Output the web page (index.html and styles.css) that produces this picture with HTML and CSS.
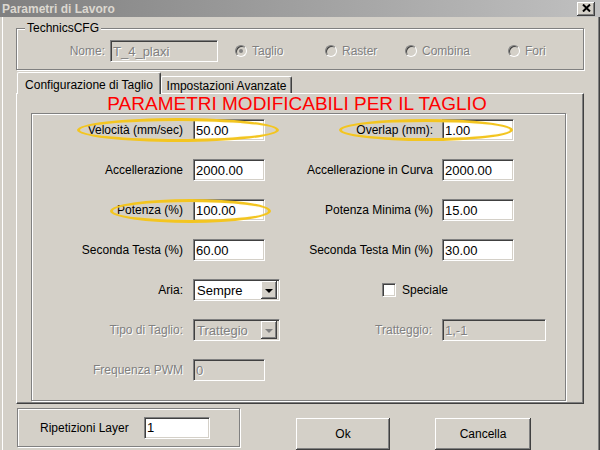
FILE: index.html
```html
<!DOCTYPE html>
<html>
<head>
<meta charset="utf-8">
<link rel="stylesheet" href="styles.css">
</head>
<body>
<div class="window">
  <div class="titlebar">
    <span class="title">Parametri di Lavoro</span>
    <span class="close"><svg width="9" height="8" viewBox="0 0 9 8"><path d="M1 0.5 L8 7.5 M8 0.5 L1 7.5" stroke="#000" stroke-width="2"/></svg></span>
  </div>

  <fieldset class="group">
    <legend>TechnicsCFG</legend>
    <div class="nome-row">
      <span class="nome-label dis">Nome:</span>
      <span class="field field-dis nome-field">T_4_plaxi</span>
      <span class="radio r-taglio"><span class="rb checked"></span><span class="dis">Taglio</span></span>
      <span class="radio r-raster"><span class="rb"></span><span class="dis">Raster</span></span>
      <span class="radio r-combina"><span class="rb"></span><span class="dis">Combina</span></span>
      <span class="radio r-fori"><span class="rb"></span><span class="dis">Fori</span></span>
    </div>
  </fieldset>

  <div class="tabs">
    <div class="tab active">Configurazione di Taglio</div>
    <div class="tab tab2">Impostazioni Avanzate</div>
  </div>

  <div class="panel">
    <div class="banner">PARAMETRI MODIFICABILI PER IL TAGLIO</div>
    <div class="inner">
      <span class="lbl">Velocità (mm/sec)</span>
      <span class="field">50.00</span>
      <span class="lbl">Overlap (mm):</span>
      <span class="field">1.00</span>

      <span class="lbl">Accellerazione</span>
      <span class="field">2000.00</span>
      <span class="lbl">Accellerazione in Curva</span>
      <span class="field">2000.00</span>

      <span class="lbl">Potenza (%)</span>
      <span class="field">100.00</span>
      <span class="lbl">Potenza Minima (%)</span>
      <span class="field">15.00</span>

      <span class="lbl">Seconda Testa (%)</span>
      <span class="field">60.00</span>
      <span class="lbl">Seconda Testa Min (%)</span>
      <span class="field">30.00</span>

      <span class="lbl">Aria:</span>
      <span class="select"><span class="sel-text">Sempre</span><span class="sel-btn"><span class="arrow"></span></span></span>
      <span class="check-item"><span class="cb"></span>Speciale</span>

      <span class="lbl dis">Tipo di Taglio:</span>
      <span class="select select-dis"><span class="sel-text dis">Trattegio</span><span class="sel-btn"><span class="arrow"></span></span></span>
      <span class="lbl dis">Tratteggio:</span>
      <span class="field field-dis wide">1,-1</span>

      <span class="lbl dis">Frequenza PWM</span>
      <span class="field field-dis">0</span>
    </div>
    <span class="ellipse e1"></span>
    <span class="ellipse e2"></span>
    <span class="ellipse e3"></span>
  </div>

  <div class="bottom">
    <div class="repeat">
      <span class="rep-label">Ripetizioni Layer</span>
      <span class="field rep-field">1</span>
    </div>
    <div class="btn btn-ok">Ok</div>
    <div class="btn btn-cancel">Cancella</div>
  </div>
</div>
</body>
</html>
```

FILE: styles.css
```css
* { box-sizing: border-box; }

body {
  margin: 0;
  width: 600px;
  height: 450px;
  overflow: hidden;
  background: #d4d0c8;
  font-family: "Liberation Sans", Arial, sans-serif;
  font-size: 12px;
  color: #000;
}

.window {
  width: 600px;
  height: 450px;
  background: #d4d0c8;
  box-shadow: inset 2px 0 0 #d4d0c8, inset 3px 0 0 #fff, inset -1px 0 0 #404040, inset -2px 0 0 #808080;
  display: flex;
  flex-direction: column;
}

/* title bar */
.titlebar {
  height: 17px;
  flex: none;
  background: linear-gradient(to right, #808080, #c0c0c0);
  display: flex;
  align-items: center;
  justify-content: space-between;
  padding: 0 5px 0 2px;
}
.title {
  color: #dcd8d0;
  font-weight: bold;
  font-size: 12px;
}
.close {
  width: 18px;
  height: 14px;
  background: #d4d0c8;
  box-shadow: inset -1px -1px #404040, inset 1px 1px #fff, inset -2px -2px #808080;
  display: flex;
  align-items: center;
  justify-content: center;
  padding-bottom: 1px;
}

.dis {
  color: #808080;
  text-shadow: 1px 1px 0 #fff;
}

/* group box */
.group {
  margin: 4px 16px 0;
  padding: 5px 0 7px;
  border: 1px solid #808080;
  box-shadow: inset 1px 1px #fff, 1px 1px #fff;
  min-width: 0;
  flex: none;
}
.group legend {
  margin-left: 8px;
  padding: 0 2px;
  line-height: 14px;
  background: #d4d0c8;
}
.nome-row {
  display: flex;
  align-items: center;
  height: 22px;
}
.nome-label {
  width: 88px;
  text-align: right;
  margin-right: 5px;
}

.radio {
  display: flex;
  align-items: center;
  gap: 5px;
}
.r-taglio { margin-left: 17px; width: 90px; }
.r-raster { width: 80px; }
.r-combina { width: 103px; }
.rb {
  width: 12px;
  height: 12px;
  border-radius: 50%;
  border: 1px solid;
  border-color: #808080 #fff #fff #808080;
  background: #d4d0c8;
  box-shadow: inset 1px 1px 0 #404040;
  display: flex;
  align-items: center;
  justify-content: center;
}
.rb.checked::after {
  content: "";
  width: 4px;
  height: 4px;
  border-radius: 50%;
  background: #808080;
}

/* fields */
.field {
  height: 22px;
  width: 72px;
  flex: none;
  background: #fff;
  border-top: 1px solid #808080;
  border-left: 1px solid #808080;
  border-bottom: 1px solid #fff;
  border-right: 1px solid #fff;
  box-shadow: inset 1px 1px #404040, inset -1px -1px #d4d0c8;
  font-size: 13px;
  padding: 0 2px;
  display: flex;
  align-items: center;
}
.field.field-dis {
  background: #d4d0c8;
  color: #808080;
  text-shadow: 1px 1px 0 #fff;
}
.field.wide { width: 104px; }
.field.nome-field { width: 108px; }
.field.rep-field { width: 66px; }

/* tabs */
.tabs {
  display: flex;
  align-items: flex-end;
  margin: 1px 0 0 17px;
  height: 22px;
  position: relative;
  z-index: 1;
  flex: none;
}
.tab {
  height: 17px;
  border-top: 1px solid #fff;
  border-left: 1px solid #fff;
  border-right: 1px solid #404040;
  box-shadow: inset -1px 0 #808080;
  border-radius: 2px 2px 0 0;
  display: flex;
  align-items: center;
  justify-content: center;
  padding-top: 1px;
}
.tab.active {
  width: 144px;
  height: 22px;
  margin-bottom: -1px;
  background: #d4d0c8;
  padding-top: 2px;
}
.tab2 { width: 131px; }

/* panel */
.panel {
  position: relative;
  margin: 0 16px;
  height: 311px;
  flex: none;
  border-top: 1px solid #fff;
  border-left: 1px solid #fff;
  border-right: 1px solid #404040;
  border-bottom: 1px solid #404040;
  box-shadow: inset -1px -1px #808080;
  display: flex;
  flex-direction: column;
}
.banner {
  height: 19px;
  color: #ff0000;
  font-size: 19px;
  line-height: 20px;
  text-align: center;
  padding-right: 6px;
}
.inner {
  margin: 0 17px 0 14px;
  height: 288px;
  border: 1px solid #808080;
  box-shadow: inset 1px 1px #fff, 1px 1px #fff;
  padding-top: 5px;
  display: grid;
  grid-template-columns: 161px 87px 162px 1fr;
  grid-auto-rows: 22px;
  row-gap: 18px;
  align-items: center;
}
.lbl {
  text-align: right;
  padding-right: 10px;
  white-space: nowrap;
}
.inner .lbl:nth-child(4n+3) { padding-right: 9px; }

.select {
  width: 87px;
  height: 22px;
  background: #fff;
  border-top: 1px solid #808080;
  border-left: 1px solid #808080;
  border-bottom: 1px solid #fff;
  border-right: 1px solid #fff;
  box-shadow: inset 1px 1px #404040, inset -1px -1px #d4d0c8;
  display: flex;
  align-items: center;
  padding: 2px;
  font-size: 13px;
}
.select-dis { background: #d4d0c8; }
.sel-text { flex: 1; padding-left: 1px; }
.sel-btn {
  width: 16px;
  height: 18px;
  background: #d4d0c8;
  box-shadow: inset -1px -1px #404040, inset 1px 1px #fff, inset -2px -2px #808080;
  display: flex;
  align-items: center;
  justify-content: center;
}
.arrow {
  width: 0;
  height: 0;
  border-left: 4px solid transparent;
  border-right: 4px solid transparent;
  border-top: 4px solid #000;
  margin-top: 1px;
}
.select-dis .arrow { border-top-color: #808080; }

.check-item {
  grid-column: 3 / span 2;
  display: flex;
  align-items: center;
  gap: 6px;
  padding-left: 102px;
  font-size: 12px;
}
.cb {
  width: 14px;
  height: 14px;
  background: #fff;
  border-top: 1px solid #808080;
  border-left: 1px solid #808080;
  border-bottom: 1px solid #fff;
  border-right: 1px solid #fff;
  box-shadow: inset 1px 1px #404040, inset -1px -1px #d4d0c8;
}

/* highlight ellipses drawn over the form */
.ellipse {
  position: absolute;
  border: 3px solid #f3c520;
  border-radius: 50%;
  box-shadow: inset 0 0 1px #f8e08a;
}
.e1 { left: 60px; top: 24px; width: 202px; height: 24px; }
.e2 { left: 322px; top: 25px; width: 174px; height: 22px; }
.e3 { left: 93px; top: 105px; width: 161px; height: 24px; }

/* bottom */
.bottom {
  display: flex;
  align-items: flex-start;
  padding-left: 17px;
  margin-top: 4px;
  flex: none;
}
.repeat {
  width: 223px;
  height: 39px;
  border: 1px solid #808080;
  box-shadow: inset 1px 1px #fff, 1px 1px #fff;
  display: flex;
  align-items: center;
  padding-left: 22px;
}
.rep-label { width: 104px; }
.btn {
  height: 32px;
  margin-top: 10px;
  background: #d4d0c8;
  box-shadow: inset -1px -1px #404040, inset 1px 1px #fff, inset -2px -2px #808080;
  display: flex;
  align-items: center;
  justify-content: center;
  font-size: 12px;
}
.btn-ok { width: 94px; margin-left: 56px; }
.btn-cancel { width: 96px; margin-left: 45px; }
```
